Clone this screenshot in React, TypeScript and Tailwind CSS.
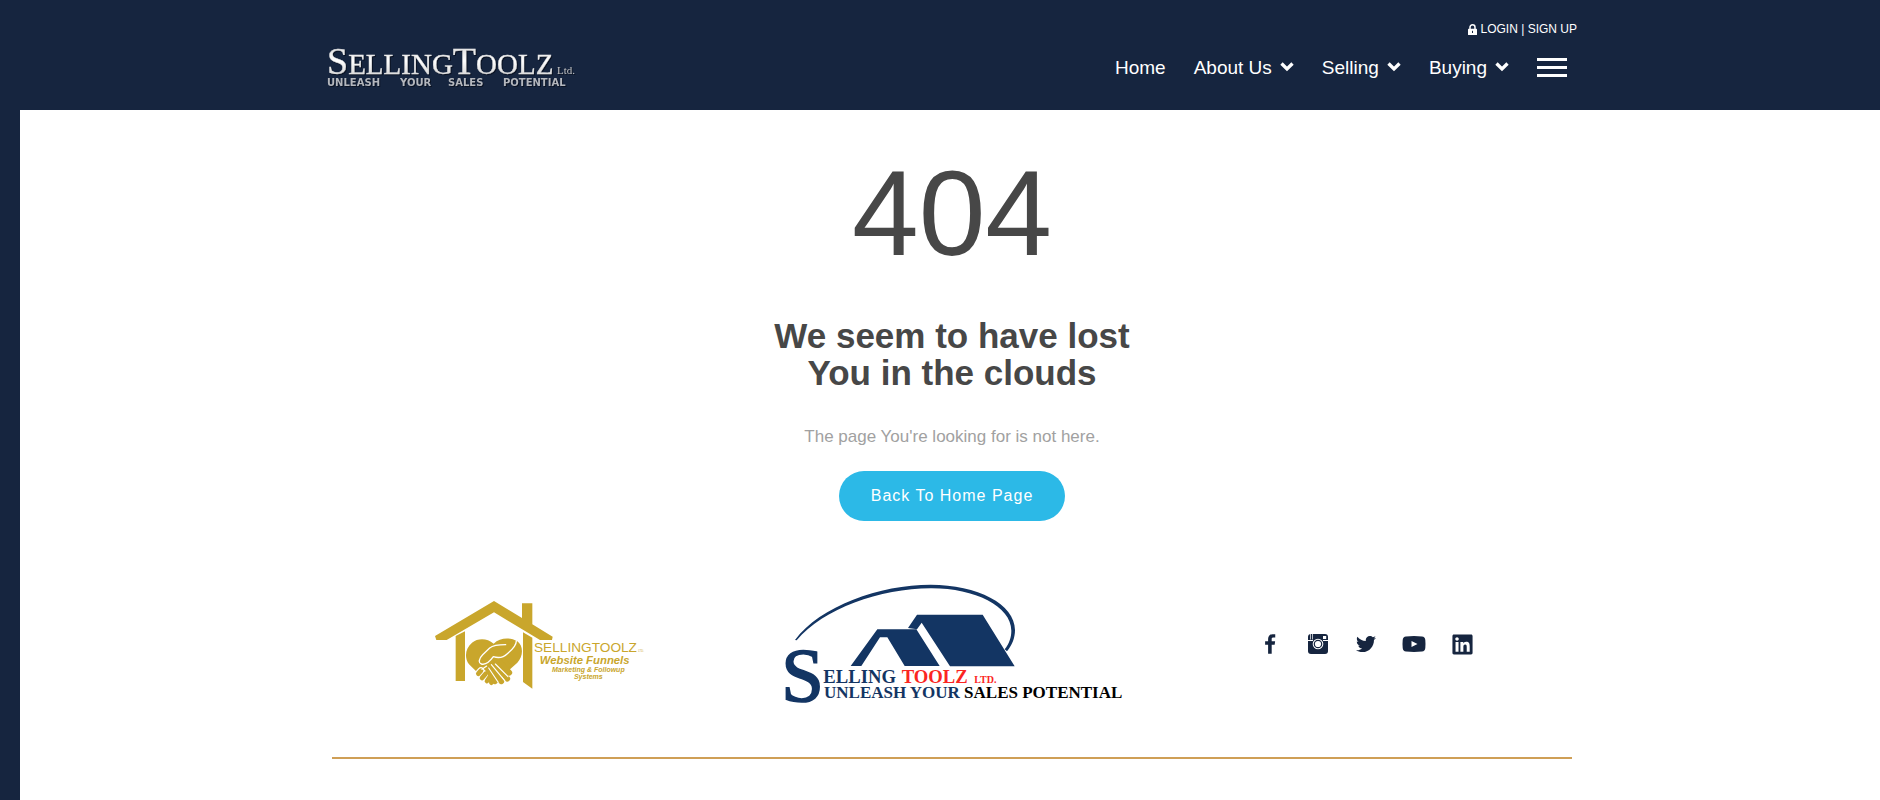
import React from "react";
import { FaLinkedin, FaTwitter } from "react-icons/fa";

const menus = ["About Us", "Selling", "Buying"];

function Chevron() {
  return (
    <svg viewBox="0 0 14 12" className="w-[14px] h-3" fill="none">
      <path d="M1.5 1.5 7 7l5.5-5.5" stroke="currentColor" strokeWidth="3.3" />
    </svg>
  );
}

function LockIcon() {
  return (
    <svg viewBox="0 0 9 11" className="w-[9px] h-[11px]" fill="none">
      <path d="M2 5.5V3.3a2.5 2.5 0 0 1 5 0v2.2" stroke="currentColor" strokeWidth="1.5" />
      <rect y="4.8" width="9" height="6.2" rx="0.6" fill="currentColor" />
      <path d="M4.5 6.8v2.2" stroke="#16253f" />
    </svg>
  );
}

function HeaderLogo() {
  return (
    <svg
      viewBox="0 0 250 50"
      className="w-[250px] h-[50px] drop-shadow-[1px_1px_0_#0a1222]"
      role="img"
      aria-label="SellingToolz Ltd."
    >
      <defs>
        <linearGradient id="silver" x1="0" y1="0" x2="0" y2="1">
          <stop offset="0" stopColor="#cfcfcf" />
          <stop offset="0.5" stopColor="#ffffff" />
          <stop offset="1" stopColor="#c4c4c4" />
        </linearGradient>
      </defs>
      <g className="font-['Liberation_Serif',serif]">
        <text
          x="0"
          y="35"
          fontSize="29"
          fill="url(#silver)"
          stroke="#e4e4e4"
          strokeWidth="0.4"
        >
          <tspan fontSize="38">S</tspan>
          <tspan>ELLING</tspan>
          <tspan fontSize="38">T</tspan>
          <tspan>OOLZ</tspan>
        </text>
        <text x="230" y="35" fontSize="11" fill="#c4c4c4">
          Ltd.
        </text>
      </g>
      <g
        className="font-['DejaVu_Sans',sans-serif]"
        fontSize="10"
        fontWeight="bold"
        fill="#b4b7bd"
      >
        <text x="0" y="47">UNLEASH</text>
        <text x="73" y="47">YOUR</text>
        <text x="121" y="47">SALES</text>
        <text x="176" y="47">POTENTIAL</text>
      </g>
    </svg>
  );
}

function FunnelsLogo() {
  return (
    <svg
      viewBox="-3 -3 720 330"
      className="w-[240px] h-[110px]"
      role="img"
      aria-label="SellingToolz Website Funnels"
    >
      <g fill="#c9a62c">
        <path d="M45 138 222 33l84 51V40h31v63l61 37-2 10h-36L222 67 80 150H49z" />
        <path d="M107 138l28-14v149h-28zM309 127l28 16v153l-28-20z" />
        <path d="M221 161c-20-17-47-17-65-3-20 17-24 44-9 65l23 22 55 35 40-38 27-24c18-19 19-50 0-64-22-13-52-11-71 7z" />
      </g>
      {/* back hand fingers */}
      <g strokeLinecap="round" fill="none">
        <path
          d="M183 242l-8 9M197 251l-11 13M210 260l-9 13M221 268l-7 10"
          stroke="#fff"
          strokeWidth="21"
        />
        <path
          d="M183 242l-8 9M197 251l-11 13M210 260l-9 13M221 268l-7 10"
          stroke="#c9a62c"
          strokeWidth="14"
        />
      </g>
      {/* front hand */}
      <g strokeLinecap="round" fill="none">
        <path
          d="M198 228l27 46M208 220l36 54M220 212l42 54M232 208l36 40"
          stroke="#c9a62c"
          strokeWidth="17"
        />
        <path
          d="M206 234l28 42M214 224l40 48M226 222l38 38M186 238l14-10"
          stroke="#fff"
          strokeWidth="3.5"
        />
      </g>
      <path
        d="M257 164c-18 0-38 2-48 10l-21 20c-11 11-14 25-4 28 14 4 26-8 36-22 16 5 32 1 42-9 16-13 27-24 27-38"
        fill="#c9a62c"
        stroke="#fff"
        strokeWidth="4"
        strokeLinecap="round"
        strokeLinejoin="round"
      />
      <path d="M250 206l20 24" stroke="#c9a62c" strokeWidth="12" />
      <g fill="#c9a62c" className="font-['Liberation_Sans',sans-serif]">
        <text x="342" y="186" fontSize="41">
          SELLINGTOOLZ
        </text>
        <text x="655" y="186" fontSize="8">
          LTD.
        </text>
        <g fontWeight="bold" fontStyle="italic" textAnchor="middle">
          <text x="494" y="221" fontSize="34">
            Website Funnels
          </text>
          <text x="505" y="245" fontSize="21">
            Marketing &amp; Followup
          </text>
          <text x="505" y="267" fontSize="21">
            Systems
          </text>
        </g>
      </g>
    </svg>
  );
}

function CompanyLogo() {
  return (
    <svg
      viewBox="6 0 1080 444"
      className="w-[360px] h-[148px]"
      role="img"
      aria-label="Selling Toolz Ltd."
    >
      <g fill="#133563">
        <path d="M75 210C150 108 330 44 482 44c140 0 253 58 253 136 0 24-9 46-24 64l-7-6c14-18 20-36 20-56C724 108 612 54 482 55 330 56 160 116 80 211z" />
        <path d="M441 134h197l96 155H540L455 158l-14 20-27-4zM322 178h117l70 110H404l-52-86h-22l-56 86h-32z" />
      </g>
      <g fill="#133563" className="font-['Liberation_Serif',serif]">
        <text
          x="34"
          y="393"
          fontSize="230"
          stroke="#133563"
          strokeWidth="5"
        >
          S
        </text>
        <g fontWeight="bold">
          <text x="160" y="338" fontSize="56">
            ELLING
          </text>
          <text x="395" y="338" fontSize="56" fill="#fb2522">
            TOOLZ
          </text>
          <text x="613" y="338" fontSize="30" fill="#fb2522">
            LTD.
          </text>
          <text x="162" y="383" fontSize="51">
            UNLEASH YOUR <tspan fill="#000">SALES POTENTIAL</tspan>
          </text>
        </g>
      </g>
    </svg>
  );
}

function FacebookIcon() {
  return (
    <svg viewBox="0 0 1024 1676" className="w-3 h-5" fill="currentColor">
      <path d="M959 12v264h-157q-86 0-116 36t-30 108v189h293l-39 296h-254v759h-306v-759h-255v-296h255v-218q0-186 104-288.5t277-102.5q147 0 228 12z" />
    </svg>
  );
}

function InstagramIcon() {
  return (
    <svg viewBox="0 0 20 20" className="w-5 h-5">
      <rect width="20" height="20" rx="3" fill="currentColor" />
      <path d="M0 6.5h5M15 6.5h5" stroke="#fff" />
      <path d="M2.5 0v5.5M4.5 0v5.5" stroke="#fff" strokeWidth="0.7" />
      <rect x="15" y="2" width="3.2" height="3" fill="#fff" />
      <circle cx="10" cy="10" r="5.3" fill="#fff" />
      <circle cx="10" cy="10" r="4.3" fill="currentColor" />
      <circle cx="10" cy="10" r="3.1" fill="#fff" />
    </svg>
  );
}

function YoutubeIcon() {
  return (
    <svg viewBox="0 0 24 20" className="w-6 h-5 shrink-0">
      <path
        d="M4 2.4Q12 1.6 20 2.4 23 2.6 23.3 6q.4 4 0 8-.3 3.4-3.3 3.6-8 .8-16 0Q1 17.4.7 14q-.4-4 0-8Q1 2.6 4 2.4z"
        fill="currentColor"
      />
      <path d="M9.5 7v6l6-3z" fill="#fff" />
    </svg>
  );
}

const socials = [
  { name: "Facebook", icon: <FacebookIcon /> },
  { name: "Instagram", icon: <InstagramIcon /> },
  { name: "Twitter", icon: <FaTwitter className="w-5 h-5" /> },
  { name: "YouTube", icon: <YoutubeIcon /> },
  { name: "LinkedIn", icon: <FaLinkedin className="w-[23px] h-[23px] shrink-0" /> },
];

function Header() {
  return (
    <header className="pl-1 text-white">
      <div className="max-w-[1250px] mx-auto flex justify-between items-start">
        <a href="#" className="pt-[39px]">
          <HeaderLogo />
        </a>
        <div className="flex flex-col items-end pt-5 pb-7">
          <a
            href="#"
            className="flex items-center gap-1 text-[12px] leading-[18px]"
          >
            <LockIcon />
            LOGIN | SIGN UP
          </a>
          <nav className="flex items-center gap-7 mt-4 pr-[10px] text-[19px] leading-7">
            <a href="#">Home</a>
            {menus.map((item) => (
              <button key={item} className="flex items-center gap-2">
                {item}
                <Chevron />
              </button>
            ))}
            <button aria-label="Menu" className="flex flex-col gap-[5px] pb-0.5">
              <span className="w-[30px] h-[3px] bg-white"></span>
              <span className="w-[30px] h-[3px] bg-white"></span>
              <span className="w-[30px] h-[3px] bg-white"></span>
            </button>
          </nav>
        </div>
      </div>
    </header>
  );
}

function App() {
  return (
    <div className="min-h-screen flex flex-col bg-[#16253f] pl-5 font-['Liberation_Sans',Arial,sans-serif]">
      <Header />
      <main className="flex-1 bg-white pl-1">
        <div className="flex flex-col items-center text-center pt-10">
          <h1 className="text-[120px] leading-[126px] text-[#474747]">404</h1>
          <h2 className="mt-[41px] text-[35px] leading-[37px] font-bold text-[#474747]">
            We seem to have lost
            <br />
            You in the clouds
          </h2>
          <p className="mt-[34px] text-[17px] leading-6 text-[#a1a1a1]">
            The page You're looking for is not here.
          </p>
          <a
            href="#"
            className="mt-[22px] px-8 rounded-full bg-[#2cb9e7] text-base leading-[50px] tracking-[1px] text-white"
          >
            Back To Home Page
          </a>
        </div>
        <footer className="max-w-[1240px] mx-auto mt-[49px] pb-12">
          <div className="grid grid-cols-3 justify-items-center items-center border-b-2 border-[#cf9f56] pb-[39px]">
            <FunnelsLogo />
            <CompanyLogo />
            <div className="flex gap-7 pl-0.5 text-[#16253f]">
              {socials.map((s) => (
                <a
                  key={s.name}
                  href="#"
                  aria-label={s.name}
                  className="w-5 h-5 flex items-center justify-center"
                >
                  {s.icon}
                </a>
              ))}
            </div>
          </div>
        </footer>
      </main>
    </div>
  );
}

export default App;
